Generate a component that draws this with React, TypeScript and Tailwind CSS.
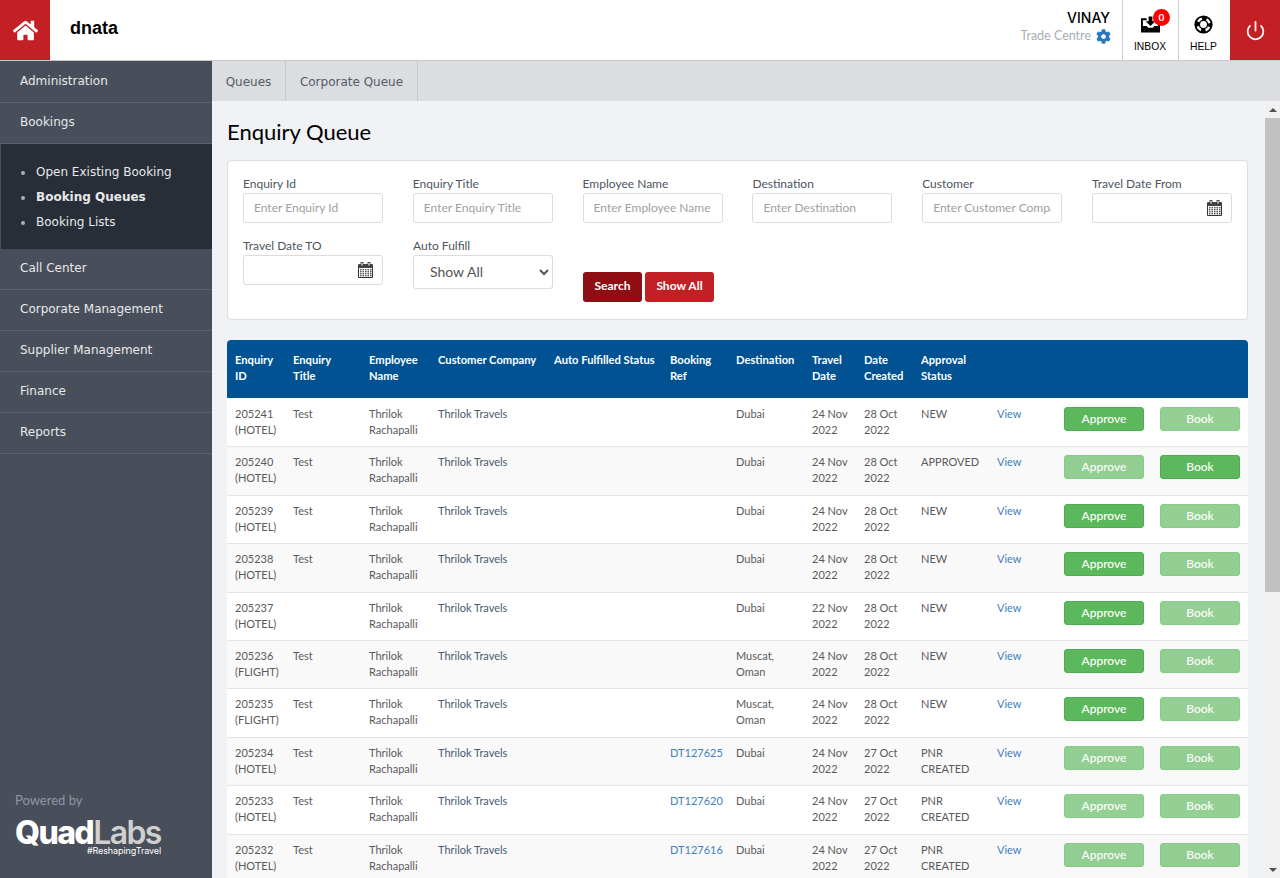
import React from "react";
import { FaHome, FaCog } from "react-icons/fa";
import { FiPower } from "react-icons/fi";

const font = "font-['Lato','Liberation_Sans',sans-serif]";

const Calendar = () => (
  <svg width="15" height="16" viewBox="0 0 15 16" className="shrink-0">
    <path d="M0.5 3 H14.5 V15.5 H0.5 Z" fill="#fff" stroke="#333" />
    <rect x="0.5" y="2" width="14" height="4" fill="#444" />
    <rect x="3" y="0.5" width="2" height="3.5" fill="#fff" stroke="#333" strokeWidth="0.8" />
    <rect x="10" y="0.5" width="2" height="3.5" fill="#fff" stroke="#333" strokeWidth="0.8" />
    {[7, 9, 11, 13].map((y) =>
      [2, 4.5, 7, 9.5, 12].map((x) => <rect key={`${x}-${y}`} x={x} y={y} width="1.5" height="1.4" fill="#555" />)
    )}
  </svg>
);

const Inbox = () => (
  <svg width="19" height="17" viewBox="0 0 20 17">
    <path d="M0 2 H6 V4 H2 V10 H6 L7.5 12 H12.5 L14 10 H18 V4 H14 V2 H20 V17 H0 Z" fill="#000" />
    <path d="M8 0 H12 V5 H15 L10 10 L5 5 H8 Z" fill="#000" />
  </svg>
);

const LifeRing = () => (
  <svg width="19" height="19" viewBox="0 0 20 20">
    <circle cx="10" cy="10" r="9.6" fill="#000" />
    <circle cx="10" cy="10" r="3.6" fill="#fff" />
    <circle cx="10" cy="10" r="6.4" fill="none" stroke="#fff" strokeWidth="2.6" strokeDasharray="5.03 5.03" strokeDashoffset="-2.51" />
  </svg>
);

const labelCls = "mb-[1px] h-[16px] text-[12px] leading-[16px] text-[#4d5560]";

const Field = ({ label, ph, date }: { label: string; ph?: string; date?: boolean }) => (
  <div className="flex w-[140px] flex-col">
    <label className={labelCls}>{label}</label>
    <div className="relative">
      <input
        placeholder={ph}
        className="h-[30px] w-full rounded-[3px] border border-[#dcdcdc] bg-white px-[10px] pb-[2px] text-[12px] text-[#555] outline-none placeholder:text-[#a0a0a0]"
      />
      {date && (
        <span className="absolute right-[10px] top-[7px]">
          <Calendar />
        </span>
      )}
    </div>
  </div>
);

type Row = {
  id: string; kind: string; title?: string; travel: string; created: string; status: string[];
  dest?: string[]; ref?: string; approve?: boolean; book?: boolean; h: string;
};

const rows: Row[] = [
  { id: "205241", kind: "HOTEL", title: "Test", travel: "24 Nov", created: "28 Oct", status: ["NEW"], approve: true, h: "h-[48px]" },
  { id: "205240", kind: "HOTEL", title: "Test", travel: "24 Nov", created: "28 Oct", status: ["APPROVED"], book: true, h: "h-[49px]" },
  { id: "205239", kind: "HOTEL", title: "Test", travel: "24 Nov", created: "28 Oct", status: ["NEW"], approve: true, h: "h-[48px]" },
  { id: "205238", kind: "HOTEL", title: "Test", travel: "24 Nov", created: "28 Oct", status: ["NEW"], approve: true, h: "h-[49px]" },
  { id: "205237", kind: "HOTEL", travel: "22 Nov", created: "28 Oct", status: ["NEW"], approve: true, h: "h-[48px]" },
  { id: "205236", kind: "FLIGHT", title: "Test", travel: "24 Nov", created: "28 Oct", status: ["NEW"], dest: ["Muscat,", "Oman"], approve: true, h: "h-[48px]" },
  { id: "205235", kind: "FLIGHT", title: "Test", travel: "24 Nov", created: "28 Oct", status: ["NEW"], dest: ["Muscat,", "Oman"], approve: true, h: "h-[49px]" },
  { id: "205234", kind: "HOTEL", title: "Test", travel: "24 Nov", created: "27 Oct", status: ["PNR", "CREATED"], ref: "DT127625", h: "h-[48px]" },
  { id: "205233", kind: "HOTEL", title: "Test", travel: "24 Nov", created: "27 Oct", status: ["PNR", "CREATED"], ref: "DT127620", h: "h-[49px]" },
  { id: "205232", kind: "HOTEL", title: "Test", travel: "24 Nov", created: "27 Oct", status: ["PNR", "CREATED"], ref: "DT127616", h: "h-[48px]" },
];

const widths = [58, 76, 69, 116, 116, 66, 76, 52, 57, 76, 67, 96, 96];
const heads = [
  ["Enquiry", "ID"], ["Enquiry", "Title"], ["Employee", "Name"], ["Customer Company"], ["Auto Fulfilled Status"],
  ["Booking", "Ref"], ["Destination"], ["Travel", "Date"], ["Date", "Created"], ["Approval", "Status"], [""], [""], [""],
];

const Two = ({ a, b }: { a?: string; b?: string }) => (
  <>
    {a}
    {b && <br />}
    {b}
  </>
);

const Btn = ({ label, on, first }: { label: string; on?: boolean; first: boolean }) => (
  <div
    className={`${first ? "mt-[9px]" : "mt-[8px]"} flex h-[24px] w-[80px] items-center justify-center rounded-[3px] border border-[#4cae4c] bg-[#5cb85c] text-[12px] font-medium text-white ${on ? "" : "opacity-65"}`}
  >
    {label}
  </div>
);

export default function App() {
  return (
    <div className={`flex h-[878px] w-[1280px] flex-col overflow-hidden bg-[#f1f2f6] ${font}`}>
      <header className="flex h-[61px] shrink-0 items-stretch border-b border-[#c9c9c9] bg-white">
        <div className="flex h-[60px] w-[50px] items-center justify-center bg-[#c32026]">
          <FaHome className="text-white" size={25} />
        </div>
        <div className="ml-[20px] flex items-center pb-[4px] text-[18px] font-bold text-black font-['Liberation_Sans',sans-serif]">dnata</div>
        <div className="ml-auto flex flex-col items-end pr-[12px] pt-[9px]">
          <div className="text-[14px] font-medium leading-[18px] text-black font-['Inter',sans-serif]">VINAY</div>
          <div className="mt-[1px] flex items-center gap-[5px] text-[12.5px] leading-[16px] text-[#a9aeb6]">
            Trade Centre <FaCog className="mr-[-1px] text-[#2a78c2]" size={15} />
          </div>
        </div>
        <div className="relative flex h-[60px] w-[56px] flex-col items-center border-l border-[#cfcfcf] pr-[1px] pt-[16px]">
          <Inbox />
          <span className="absolute left-[30px] top-[9px] flex h-[17px] w-[17px] items-center justify-center rounded-full bg-[#f00] text-[10px] font-bold text-white">0</span>
          <span className="mt-[8px] text-[10.3px] leading-[12px] text-black font-['Liberation_Sans',sans-serif]">INBOX</span>
        </div>
        <div className="flex h-[60px] w-[52px] flex-col items-center border-l border-[#cfcfcf] pr-[2px] pt-[15px]">
          <LifeRing />
          <span className="mt-[7px] text-[10.3px] leading-[12px] text-black font-['Liberation_Sans',sans-serif]">HELP</span>
        </div>
        <div className="flex h-[60px] w-[50px] items-center justify-center bg-[#c32026]">
          <FiPower className="text-white" size={21} />
        </div>
      </header>

      <div className="flex min-h-0 flex-1">
        <aside className="flex w-[212px] shrink-0 flex-col bg-[#484f5b] font-['DejaVu_Sans',sans-serif] text-[12px] text-[#e8e8e8]">
          <div className="flex h-[42px] items-center border-b border-[#5a606b] pb-[2px] pl-[20px]">Administration</div>
          <div className="flex h-[41px] items-center border-b border-[#5a606b] pb-[2px] pl-[20px]">Bookings</div>
          <ul className="flex h-[105px] flex-col gap-[10px] border-l border-[#484f5b] bg-[#272e38] pl-[20px] pt-[21px] text-[#e8e8e8]">
            {["Open Existing Booking", "Booking Queues", "Booking Lists"].map((t, i) => (
              <li key={t} className={`flex h-[15px] items-center gap-[11px] leading-[15px] ${i === 1 ? "font-bold" : ""}`}>
                <span className="h-[4px] w-[4px] rounded-full bg-[#aab0b8]" />
                {t}
              </li>
            ))}
          </ul>
          {["Call Center", "Corporate Management", "Supplier Management", "Finance", "Reports"].map((t) => (
            <div key={t} className="flex h-[41px] items-center border-b border-[#5a606b] pb-[2px] pl-[20px]">{t}</div>
          ))}
          <div className="mt-auto pb-[20px] pl-[15px]">
            <div className={`text-[13px] leading-[16px] text-[#8f96a1] ${font}`}>Powered by</div>
            <div className="relative mt-[13px] h-[37px] w-[150px] font-['Inter',sans-serif]">
              <div className="text-[32px] font-extrabold leading-[24px] tracking-[-1.6px]">
                <span className="text-white">Quad</span><span className="font-semibold text-[#cfcfcf]">Labs</span>
              </div>
              <div className="absolute right-[4px] top-[24px] text-[9px] leading-[11px] tracking-[-0.1px] text-white">#ReshapingTravel</div>
            </div>
          </div>
        </aside>

        <div className="flex min-w-0 flex-1 flex-col">
          <nav className="flex h-[40px] shrink-0 bg-[#dcdde1] font-['DejaVu_Sans',sans-serif] text-[12px] text-[#555c66]">
            <div className="flex w-[74px] items-center justify-center border-r border-[#c6c7cb] pt-[2px]">Queues</div>
            <div className="flex w-[132px] items-center justify-center border-r border-[#c6c7cb] pt-[2px]">Corporate Queue</div>
          </nav>
          <div className="flex min-h-0 flex-1">
            <main className="min-w-0 flex-1 overflow-hidden pl-[15px] pr-[17px]">
              <h1 className="mt-[18px] text-[22px] leading-[26px] text-black">Enquiry Queue</h1>
              <section className="mt-[15px] h-[160px] rounded-[4px] border border-[#dedede] bg-white px-[15px] pt-[15px]">
                <div className="flex justify-between">
                  <Field label="Enquiry Id" ph="Enter Enquiry Id" />
                  <Field label="Enquiry Title" ph="Enter Enquiry Title" />
                  <Field label="Employee Name" ph="Enter Employee Name" />
                  <Field label="Destination" ph="Enter Destination" />
                  <Field label="Customer" ph="Enter Customer Company" />
                  <Field label="Travel Date From" date />
                </div>
                <div className="mt-[15px] flex items-start">
                  <Field label="Travel Date TO" date />
                  <div className="ml-[30px] flex w-[140px] flex-col">
                    <label className={labelCls}>Auto Fulfill</label>
                    <select className="h-[34px] w-full rounded-[3px] border border-[#dcdcdc] bg-white px-[12px] pb-[2px] text-[14px] text-[#555] outline-none">
                      <option>Show All</option>
                    </select>
                  </div>
                  <div className="ml-[30px] mt-[34px] flex gap-[3px] text-[12px] font-bold text-white">
                    <button className="flex h-[30px] w-[59px] items-center justify-center rounded-[3px] bg-[#8f0e14] pb-[2px]">Search</button>
                    <button className="flex h-[30px] w-[69px] items-center justify-center rounded-[3px] bg-[#c32026] pb-[2px]">Show All</button>
                  </div>
                </div>
              </section>
              <table className="mt-[20px] w-[1021px] table-fixed border-collapse bg-white">
                <colgroup>
                  {widths.map((w, i) => <col key={i} style={{ width: w }} />)}
                </colgroup>
                <thead>
                  <tr className="h-[58px] bg-[#005293]">
                    {heads.map((h, i) => (
                      <th
                        key={i}
                        className={`whitespace-nowrap px-[8px] pt-[12px] align-top text-left text-[11.2px] font-bold leading-[16px] text-white ${i === 0 ? "rounded-tl-[4px]" : ""} ${i === 12 ? "rounded-tr-[4px]" : ""}`}
                      >
                        <Two a={h[0]} b={h[1]} />
                      </th>
                    ))}
                  </tr>
                </thead>
                <tbody>
                  {rows.map((r, i) => {
                    const cell = `align-top px-[8px] ${i === 0 ? "pt-[8px]" : "pt-[7px]"} text-[11px] leading-[16px]`;
                    const plain = `${cell} text-[#5a5a5a]`;
                    const link = `${cell} text-[#4080bf]`;
                    return (
                      <tr key={r.id} className={`${r.h} border-b border-[#e4e5e7] ${i % 2 ? "bg-[#f9f9f9]" : "bg-white"}`}>
                        <td className={plain}><Two a={r.id} b={`(${r.kind})`} /></td>
                        <td className={plain}>{r.title}</td>
                        <td className={plain}><Two a="Thrilok" b="Rachapalli" /></td>
                        <td className={`${cell} whitespace-nowrap text-[#4a5a70]`}>Thrilok Travels</td>
                        <td className={plain} />
                        <td className={link}>{r.ref}</td>
                        <td className={plain}>{r.dest ? <Two a={r.dest[0]} b={r.dest[1]} /> : "Dubai"}</td>
                        <td className={`${plain} whitespace-nowrap`}><Two a={r.travel} b="2022" /></td>
                        <td className={`${plain} whitespace-nowrap`}><Two a={r.created} b="2022" /></td>
                        <td className={plain}><Two a={r.status[0]} b={r.status[1]} /></td>
                        <td className={link}>View</td>
                        <td className="px-[8px] align-top"><Btn label="Approve" on={r.approve} first={i === 0} /></td>
                        <td className="px-[8px] align-top"><Btn label="Book" on={r.book} first={i === 0} /></td>
                      </tr>
                    );
                  })}
                </tbody>
              </table>
            </main>
            <div className="flex w-[15px] shrink-0 flex-col bg-[#f1f1f1]">
              <div className="flex h-[17px] items-center justify-center">
                <div className="h-0 w-0 border-x-[4px] border-b-[4px] border-x-transparent border-b-[#505050]" />
              </div>
              <div className="h-[474px] bg-[#c1c1c1]" />
              <div className="mt-auto flex h-[17px] items-center justify-center">
                <div className="h-0 w-0 border-x-[4px] border-t-[4px] border-x-transparent border-t-[#505050]" />
              </div>
            </div>
          </div>
        </div>
      </div>
    </div>
  );
}
